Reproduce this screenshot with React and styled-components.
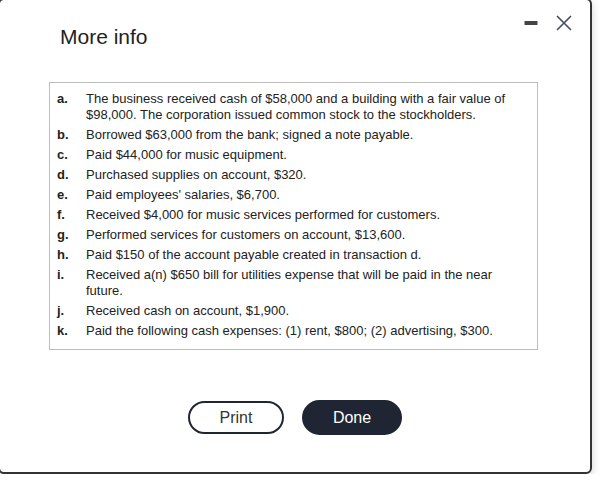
import styled, { createGlobalStyle } from "styled-components";

const GlobalStyle = createGlobalStyle`
  html, body {
    margin: 0;
    padding: 0;
    background: #ffffff;
    overflow: hidden;
  }
  body {
    font-family: "Liberation Sans", Arial, sans-serif;
    color: #222;
  }
`;

const Dialog = styled.div`
  box-sizing: border-box;
  width: 594px;
  height: 476px;
  margin: -2px 0 0 -2px;
  border: 2px solid #333;
  border-radius: 6px;
  background: #fff;
  box-shadow: 0 3px 8px rgba(0, 0, 0, 0.18);
  display: flex;
  flex-direction: column;
`;

const Header = styled.div`
  display: flex;
  align-items: flex-start;
  justify-content: space-between;
  padding: 25px 18px 0 60px;
  height: 57px;
`;

const Title = styled.h2`
  margin: 0;
  font-size: 21px;
  font-weight: normal;
  color: #222;
  line-height: 24px;
`;

const Controls = styled.div`
  display: flex;
  align-items: center;
  gap: 18px;
  margin-top: -10px;
`;

const IconButton = styled.button`
  background: none;
  border: none;
  padding: 0;
  display: flex;
  cursor: pointer;
`;

const InfoBox = styled.div`
  margin-left: 49px;
  width: 489px;
  box-sizing: border-box;
  border: 1px solid #bdbdbd;
  padding: 8px 8px 10px 7px;
`;

const List = styled.ol`
  list-style: none;
  margin: 0;
  padding: 0;
  display: flex;
  flex-direction: column;
  gap: 4px;
`;

const Item = styled.li`
  display: grid;
  grid-template-columns: 29px 1fr;
  font-size: 13px;
  line-height: 16px;
  color: #222;
`;

const Letter = styled.span`
  font-weight: bold;
`;

const Footer = styled.div`
  display: flex;
  justify-content: center;
  align-items: center;
  gap: 18px;
  margin-top: 50px;
`;

const PillButton = styled.button`
  box-sizing: border-box;
  width: ${(p) => (p.$primary ? "100px" : "96px")};
  height: ${(p) => (p.$primary ? "35px" : "33px")};
  border-radius: 18px;
  border: 2px solid #1f2532;
  background: ${(p) => (p.$primary ? "#1f2532" : "#fff")};
  color: ${(p) => (p.$primary ? "#fff" : "#333")};
  font-family: "Liberation Sans", Arial, sans-serif;
  font-size: 16px;
  cursor: pointer;
`;

const items = [
  ["a.", "The business received cash of $58,000 and a building with a fair value of $98,000. The corporation issued common stock to the stockholders."],
  ["b.", "Borrowed $63,000 from the bank; signed a note payable."],
  ["c.", "Paid $44,000 for music equipment."],
  ["d.", "Purchased supplies on account, $320."],
  ["e.", "Paid employees' salaries, $6,700."],
  ["f.", "Received $4,000 for music services performed for customers."],
  ["g.", "Performed services for customers on account, $13,600."],
  ["h.", "Paid $150 of the account payable created in transaction d."],
  ["i.", "Received a(n) $650 bill for utilities expense that will be paid in the near future."],
  ["j.", "Received cash on account, $1,900."],
  ["k.", "Paid the following cash expenses: (1) rent, $800; (2) advertising, $300."],
];

export default function App() {
  return (
    <>
      <GlobalStyle />
      <Dialog>
        <Header>
          <Title>More info</Title>
          <Controls>
            <IconButton aria-label="Minimize">
              <svg width="14" height="14" viewBox="0 0 14 14">
                <rect x="0.5" y="5" width="13" height="4" rx="0.5" fill="#444" />
              </svg>
            </IconButton>
            <IconButton aria-label="Close">
              <svg width="16" height="16" viewBox="0 0 16 16">
                <path d="M1.5 1.5 L14.5 14.5 M14.5 1.5 L1.5 14.5" stroke="#4a5060" strokeWidth="1.7" strokeLinecap="round" fill="none" />
              </svg>
            </IconButton>
          </Controls>
        </Header>
        <InfoBox>
          <List>
            {items.map(([l, t]) => (
              <Item key={l}>
                <Letter>{l}</Letter>
                <span>{t}</span>
              </Item>
            ))}
          </List>
        </InfoBox>
        <Footer>
          <PillButton>Print</PillButton>
          <PillButton $primary>Done</PillButton>
        </Footer>
      </Dialog>
    </>
  );
}
